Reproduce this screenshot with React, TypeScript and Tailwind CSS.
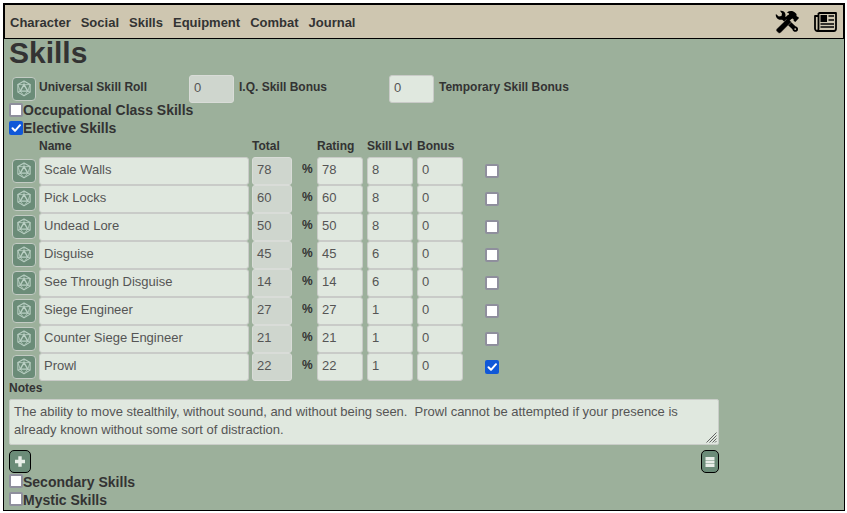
import React from "react";

const tabs = ["Character", "Social", "Skills", "Equipment", "Combat", "Journal"];

const skills = [
  { name: "Scale Walls", total: 78, level: 8, open: false },
  { name: "Pick Locks", total: 60, level: 8, open: false },
  { name: "Undead Lore", total: 50, level: 8, open: false },
  { name: "Disguise", total: 45, level: 6, open: false },
  { name: "See Through Disguise", total: 14, level: 6, open: false },
  { name: "Siege Engineer", total: 27, level: 1, open: false },
  { name: "Counter Siege Engineer", total: 21, level: 1, open: false },
  { name: "Prowl", total: 22, level: 1, open: true },
];

function DiceButton() {
  return (
    <button className="flex size-6 shrink-0 items-center justify-center rounded-[4px] border border-[#c3cbc4] bg-[#6b8c78] pb-[1px]">
      <svg width="16" height="17" viewBox="0 0 16 18" fill="none" stroke="#b9cfc3" strokeWidth="1.100" strokeLinejoin="round">
        <path d="M8 1 14.5 4.8v8L8 16.8 1.500 12.800v-8z" />
        <path d="M8 5 12 11.800H4z" strokeWidth="1.500" />
        <path d="M8 1v4M1.500 4.800 8 5l6.500-.2M1.500 4.800 4 11.800l-2.500 1M14.500 4.800 12 11.800l2.500 1M4 11.800l4 5 4-5" strokeWidth="0.900" />
      </svg>
    </button>
  );
}

function Check({ on = false }: { on?: boolean }) {
  return on ? (
    <span className="block size-3.5 shrink-0 rounded-[2px] bg-[#1058d8]">
      <svg width="14" height="14" viewBox="0 0 14 14" fill="none" stroke="white" strokeWidth="2" strokeLinecap="round" strokeLinejoin="round">
        <path d="M3.500 7.300 6 9.800l5-5.600" />
      </svg>
    </span>
  ) : (
    <span className="block size-3.5 shrink-0 rounded-[2px] border-2 border-[#8f8f9d] bg-white" />
  );
}

function Field({ value, size, muted = false }: { value: string | number; size: string; muted?: boolean }) {
  return (
    <div
      className={`h-7 shrink-0 rounded-[3px] border pl-1 text-[13px] leading-6 text-[#555] ${
        muted ? "border-[#d9dcd8] bg-[#cfd6ce]" : "border-[#c9cbc8] bg-[#e0e8df]"
      } ${size}`}
    >
      {value}
    </div>
  );
}

function Section({ title, on = false, low = false }: { title: string; on?: boolean; low?: boolean }) {
  return (
    <div className="flex h-[18px] items-start">
      <Check on={on} />
      <span className={`text-[14px] font-bold ${low ? "leading-[17px]" : "leading-[15px]"}`}>{title}</span>
    </div>
  );
}

function ToolsIcon() {
  return (
    <svg width="24" height="24" viewBox="0 0 24 24">
      <path d="M5 .8C7.300.4 9.800 1.400 10.400 4c.2.900.1 1.700-.1 2.400L20.400 16.200c1.900.2 3 1.800 2.600 3.500-.3 1.600-2 2.500-3.600 2-1.100-.4-1.900-1.300-2-2.500L7.200 9.700C4.700 10.300 1.900 9.200 1 6.500c-.3-.9-.3-1.700-.1-2.500L3.800 6.500l2.700-.6.500-2.500z" />
      <path d="M1.600 18.900 12.600 8.300l3.800 3.800L5.700 22.800c-.8.700-1.800.6-2.500-.1l-1.500-1.500c-.7-.7-.8-1.600-.1-2.300z" stroke="#cec6b0" strokeWidth="0.400" />
      <path d="M11.800 2.500c2.700-2 6.200-1.900 8.400.2l1.300 1.400v1.800l.8.9.7-.1 1 1.300-3.700 4-1.700-1.300.1-1.300-1-.9-1.300.5-2.700 2.600-3.800-3.800 3-2.900C15.300 4.400 13.900 3 11.800 2.500z" />
      <circle cx="20.200" cy="19.100" r="0.900" fill="#cec6b0" />
    </svg>
  );
}

function NewsIcon() {
  return (
    <svg width="23" height="20" viewBox="0 0 23 20" fill="none" stroke="black" strokeWidth="1.800">
      <path d="M4.500 1h17.500v15.500c0 1.500-.8 2.500-2.200 2.500H3.500C2 19 1 18 1 16.500V4h3.500M4.500 1v15.500C4.500 18 4 19 3 19" strokeLinejoin="round" />
      <path d="M6.500 3h6.500v7H6.500z" fill="black" stroke="none" />
      <path d="M14.500 4h5.500M14.500 8h5.500M6.500 12h13.500M6.500 15h13.500" strokeWidth="1.500" />
    </svg>
  );
}

export default function App() {
  return (
    <div className="h-[513px] w-[847px] bg-white pt-[3px] pl-[3px] font-['Liberation_Sans',Arial,sans-serif] text-[#333]">
      <main className="h-[508px] w-[842px] border border-black bg-[#9cb09b]">
        <header className="flex h-[35px] items-center justify-between border border-black bg-[#cec6b0] pt-[1px] pr-[6px] pl-[5px]">
          <nav className="flex gap-[10px] pt-[1px] text-[13px] leading-4 font-bold">
            {tabs.map((tab) => (
              <a key={tab}>{tab}</a>
            ))}
          </nav>
          <div className="flex items-center gap-[15px]">
            <ToolsIcon />
            <NewsIcon />
          </div>
        </header>

        <div className="pl-[5px]">
          <h1 className="h-9 text-[30px] leading-[27px] font-bold">Skills</h1>

          <div className="flex h-7 text-[12px] leading-6 font-bold">
            <div className="w-[30px] pt-[2px] pl-[3px]">
              <DiceButton />
            </div>
            <span className="w-[150px]">Universal Skill Roll</span>
            <div className="w-[50px] font-normal">
              <Field value={0} size="w-[45px]" muted />
            </div>
            <span className="w-[150px]">I.Q. Skill Bonus</span>
            <div className="w-[50px] font-normal">
              <Field value={0} size="w-[45px]" />
            </div>
            <span>Temporary Skill Bonus</span>
          </div>

          <Section title="Occupational Class Skills" />
          <Section title="Elective Skills" on />

          <div className="flex h-[18px] pl-[30px] text-[12px] leading-[14px] font-bold">
            <span className="w-[213px]">Name</span>
            <span className="w-[65px]">Total</span>
            <span className="w-[50px]">Rating</span>
            <span className="w-[50px] whitespace-nowrap">Skill Lvl</span>
            <span>Bonus</span>
          </div>

          {skills.map((skill) => (
            <div key={skill.name} className="flex h-7">
              <div className="w-[30px] pt-[2px] pl-[3px]">
                <DiceButton />
              </div>
              <Field value={skill.name} size="mr-[3px] w-[210px]" />
              <Field value={skill.total} size="w-10" muted />
              <span className="w-[25px] pl-[10px] text-[12px] leading-6 font-bold">%</span>
              <div className="flex gap-1">
                <Field value={skill.total} size="w-[46px]" />
                <Field value={skill.level} size="w-[46px]" />
                <Field value={0} size="w-[46px]" />
              </div>
              <div className="pt-[7px] pl-[22px]">
                <Check on={skill.open} />
              </div>
            </div>
          ))}

          <div className="h-[18px] text-[12px] leading-[14px] font-bold">Notes</div>
          <div className="relative h-[46px] w-[710px] rounded-[2px] border border-[#c9cdc8] bg-[#e0e8df] pt-[3px] pl-1 text-[13px] leading-[18px] tracking-[-0.013px] whitespace-pre text-[#555]">
            {"The ability to move stealthily, without sound, and without being seen.  Prowl cannot be attempted if your presence is\nalready known without some sort of distraction."}
            <svg className="absolute right-[1px] bottom-[1px]" width="11" height="11" viewBox="0 0 11 11" stroke="#555" strokeWidth="0.900">
              <path d="M.5 10.500l10-10M3.500 10.500l7-7M6.500 10.500l4-4M9 10.500l1.500-1.500" />
            </svg>
          </div>

          <div className="flex h-[29px] w-[710px] justify-between pt-[5px]">
            <button className="flex h-[23px] w-[22px] items-center justify-center rounded-[5px] border border-black bg-[#6b8c78]">
              <svg width="10" height="11" viewBox="0 0 10 11" fill="#e8eee8">
                <path d="M3.300.3h3.400v3.500H10v3.400H6.700v3.500H3.300V7.200H0V3.800h3.300z" />
              </svg>
            </button>
            <button className="flex h-[23px] w-[18px] items-center justify-center rounded-[5px] border border-black bg-[#6b8c78] pt-[1px]">
              <svg width="10" height="10" viewBox="0 0 10 10" fill="#e8eee8">
                <path d="M.5 0h9v2.900h-9zM.5 3.500h9v2.900h-9zM.5 7h9v2.900h-9z" />
              </svg>
            </button>
          </div>

          <Section title="Secondary Skills" low />
          <Section title="Mystic Skills" low />
        </div>
      </main>
    </div>
  );
}
